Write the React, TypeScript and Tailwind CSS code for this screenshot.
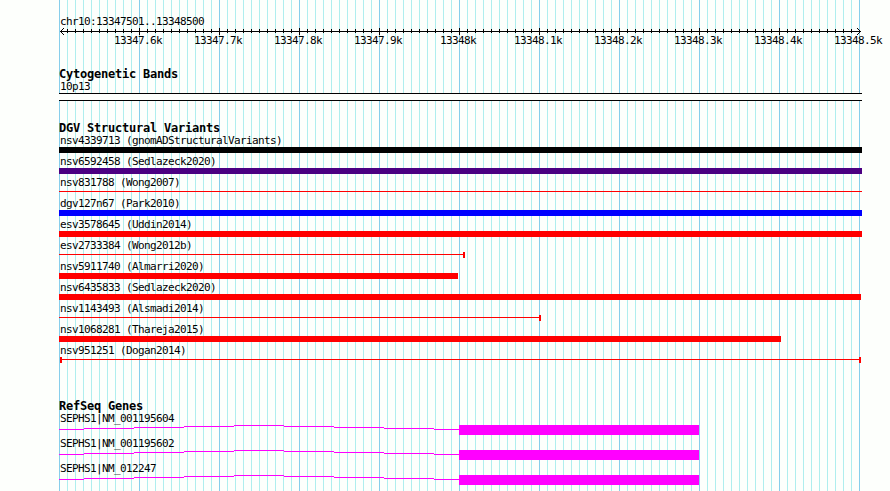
import React from 'react';

type Shape = 'bar' | 'line' | 'capRight' | 'capBoth';

interface Variant {
  label: string;
  color: string;
  shape: Shape;
  width: number;
}

const variants: Variant[] = [
  { label: 'nsv4339713 (gnomADStructuralVariants)', color: 'bg-black', shape: 'bar', width: 803 },
  { label: 'nsv6592458 (Sedlazeck2020)', color: 'bg-[#4b0082]', shape: 'bar', width: 803 },
  { label: 'nsv831788 (Wong2007)', color: 'bg-[#ff0000]', shape: 'line', width: 803 },
  { label: 'dgv127n67 (Park2010)', color: 'bg-[#0000ff]', shape: 'bar', width: 803 },
  { label: 'esv3578645 (Uddin2014)', color: 'bg-[#ff0000]', shape: 'bar', width: 803 },
  { label: 'esv2733384 (Wong2012b)', color: 'bg-[#ff0000]', shape: 'capRight', width: 406 },
  { label: 'nsv5911740 (Almarri2020)', color: 'bg-[#ff0000]', shape: 'bar', width: 399 },
  { label: 'nsv6435833 (Sedlazeck2020)', color: 'bg-[#ff0000]', shape: 'bar', width: 802 },
  { label: 'nsv1143493 (Alsmadi2014)', color: 'bg-[#ff0000]', shape: 'capRight', width: 482 },
  { label: 'nsv1068281 (Thareja2015)', color: 'bg-[#ff0000]', shape: 'bar', width: 722 },
  { label: 'nsv951251 (Dogan2014)', color: 'bg-[#ff0000]', shape: 'capBoth', width: 802 },
];

const genes = ['SEPHS1|NM_001195604', 'SEPHS1|NM_001195602', 'SEPHS1|NM_012247'];

const scaleLabels = [
  '13347.6k', '13347.7k', '13347.8k', '13347.9k', '13348k',
  '13348.1k', '13348.2k', '13348.3k', '13348.4k', '13348.5k',
];

const Label = ({ children }: { children: React.ReactNode }) => (
  <div className="h-[13px] pl-px text-[11px] leading-[13px] tracking-[-0.622px] whitespace-pre">{children}</div>
);

const Heading = ({ children }: { children: React.ReactNode }) => (
  <h2 className="h-3 text-[12px] leading-3 font-bold tracking-[-0.224px] whitespace-pre">{children}</h2>
);

const Grid = () => (
  <svg className="absolute top-0 left-[59px]" width="801" height="491" shapeRendering="crispEdges">
    {Array.from({ length: 101 }, (_, i) => (
      <rect key={i} x={i * 8} y="0" width="1" height="491" fill={i % 10 === 0 ? '#87ceeb' : '#afeeee'} />
    ))}
  </svg>
);

const Axis = () => (
  <svg className="block h-2 w-[803px]" viewBox="0 0 803 8" shapeRendering="crispEdges">
    <rect x="1" y="3" width="801" height="1" />
    {Array.from({ length: 99 }, (_, i) => {
      const major = (i + 1) % 10 === 0;
      return <rect key={i} x={(i + 1) * 8} y={major ? 0 : 1} width="1" height={major ? 7 : 4} />;
    })}
    {[1, 2, 3].map((n) => (
      <React.Fragment key={n}>
        <rect x={1 + n} y={3 - n} width="1" height="1" />
        <rect x={1 + n} y={3 + n} width="1" height="1" />
        <rect x={801 - n} y={3 - n} width="1" height="1" />
        <rect x={801 - n} y={3 + n} width="1" height="1" />
      </React.Fragment>
    ))}
  </svg>
);

const Glyph = ({ variant }: { variant: Variant }) => {
  const { color, shape, width } = variant;
  if (shape === 'bar') {
    return <div className={`h-1.5 ${color}`} style={{ width }} />;
  }
  return (
    <div className={`flex h-1.5 ${shape === 'capBoth' ? 'pl-px' : ''}`} style={{ width }}>
      {shape === 'capBoth' && <div className={`w-0.5 ${color}`} />}
      <div className={`mt-0.5 h-px flex-1 ${color}`} />
      {shape !== 'line' && <div className={`w-0.5 ${color}`} />}
    </div>
  );
};

const GeneModel = () => (
  <svg className="block h-3 w-[803px]" viewBox="0 0 803 12" shapeRendering="crispEdges" fill="#ff00ff">
    <rect x="0" y="4" width="25" height="1" />
    <rect x="25" y="3" width="50" height="1" />
    <rect x="75" y="2" width="50" height="1" />
    <rect x="125" y="1" width="50" height="1" />
    <rect x="175" y="0" width="50" height="1" />
    <rect x="225" y="1" width="50" height="1" />
    <rect x="275" y="2" width="50" height="1" />
    <rect x="325" y="3" width="50" height="1" />
    <rect x="375" y="4" width="25" height="1" />
    <rect x="400" y="0" width="240" height="10" />
  </svg>
);

export default function App() {
  return (
    <div className="relative h-[491px] w-[890px] overflow-hidden bg-[#fdfffc] font-['DejaVu_Sans_Mono',monospace] text-black">
      <Grid />
      <main className="relative pt-[15px] pl-[59px]">
        {/* Scale */}
        <Label>chr10:13347501..13348500</Label>
        <Axis />
        <div className="-mt-[2px] ml-10 flex h-[13px] w-[800px]">
          {scaleLabels.map((label) => (
            <span key={label} className={`w-20 shrink-0 text-[11px] leading-[13px] tracking-[-0.622px] ${label === '13348k' ? 'pl-[21px]' : 'pl-[15px]'}`}>
              {label}
            </span>
          ))}
        </div>

        <section className="mt-[21px]">
          <Heading>Cytogenetic Bands</Heading>
          <Label>10p13</Label>
          <div className="h-2 w-[803px] border-y border-black bg-[#fdfffc]" />
        </section>

        <section className="mt-[21px]">
          <Heading>DGV Structural Variants</Heading>
          {variants.map((variant) => (
            <div key={variant.label} className="h-[21px]">
              <Label>{variant.label}</Label>
              <Glyph variant={variant} />
            </div>
          ))}
        </section>

        <section className="mt-[35px]">
          <Heading>RefSeq Genes</Heading>
          {genes.map((gene) => (
            <div key={gene} className="h-[25px]">
              <Label>{gene}</Label>
              <GeneModel />
            </div>
          ))}
        </section>
      </main>
    </div>
  );
}
